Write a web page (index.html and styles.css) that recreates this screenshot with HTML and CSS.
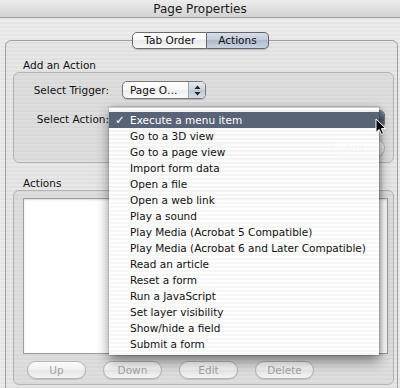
FILE: index.html
```html
<!DOCTYPE html>
<html lang="en">
<head>
    <meta charset="UTF-8">
    <meta name="viewport" content="width=device-width, initial-scale=1.0">
    <title>Page Properties</title>
    <link rel="stylesheet" href="styles.css">
</head>
<body>
    <div class="window">
        <div class="titlebar">Page Properties</div>

        <div class="window-body">
            <div class="tab-switch">
                <span class="tab-seg">Tab Order</span>
                <span class="tab-seg selected">Actions</span>
            </div>

            <div class="tab-panel">
                <div class="group-title">Add an Action</div>
                <div class="group add-group">
                    <div class="field-row">
                        <span class="field-label">Select Trigger:</span>
                        <div class="popup trigger-popup">
                            <span class="popup-text">Page O…</span>
                            <span class="popup-arrows">
                                <svg width="7" height="11" viewBox="0 0 7 11"><path d="M3.5 0.5 L6.5 4 L0.5 4 Z M3.5 10.5 L6.5 7 L0.5 7 Z" fill="#222"/></svg>
                            </span>
                        </div>
                    </div>
                    <div class="field-row second">
                        <span class="field-label">Select Action:</span>
                        <div class="popup action-popup open">
                            <span class="popup-text">Execute a menu item</span>
                            <span class="popup-arrows"></span>
                        </div>
                    </div>
                    <div class="add-row">
                        <button class="aqua-btn" disabled>Add...</button>
                    </div>
                </div>

                <div class="group-title second">Actions</div>
                <div class="group list-group">
                    <div class="action-list"></div>
                    <div class="list-buttons">
                        <button class="aqua-btn" disabled>Up</button>
                        <button class="aqua-btn" disabled>Down</button>
                        <button class="aqua-btn" disabled>Edit</button>
                        <button class="aqua-btn" disabled>Delete</button>
                    </div>
                </div>
            </div>
        </div>

        <!-- open pop-up menu for Select Action -->
        <ul class="popup-menu">
            <li class="checked"><span class="check">✓</span>Execute a menu item</li>
            <li>Go to a 3D view</li>
            <li>Go to a page view</li>
            <li>Import form data</li>
            <li>Open a file</li>
            <li>Open a web link</li>
            <li>Play a sound</li>
            <li>Play Media (Acrobat 5 Compatible)</li>
            <li>Play Media (Acrobat 6 and Later Compatible)</li>
            <li>Read an article</li>
            <li>Reset a form</li>
            <li>Run a JavaScript</li>
            <li>Set layer visibility</li>
            <li>Show/hide a field</li>
            <li>Submit a form</li>
        </ul>

        <svg class="cursor" width="12" height="18" viewBox="0 0 12 18">
            <path d="M1 1 L1 14.5 L4.2 11.4 L6.4 16.4 L8.6 15.4 L6.4 10.6 L10.8 10.6 Z" fill="#000" stroke="#fff" stroke-width="1"/>
        </svg>
    </div>
</body>
</html>
```

FILE: styles.css
```css
:root {
    --stripe-a: #ececec;
    --stripe-b: #e5e5e5;
    --group-border: #b2b2b2;
    --panel-border: #a0a0a0;
    --menu-highlight: #5a6477;
    --disabled-text: #a3a3a3;
}

* {
    margin: 0;
    padding: 0;
    box-sizing: border-box;
}

body {
    width: 400px;
    height: 388px;
    overflow: hidden;
    font-family: "DejaVu Sans", "Liberation Sans", sans-serif;
    font-size: 10.5px;
    color: #111;
}

.window {
    position: relative;
    height: 388px;
    background: repeating-linear-gradient(to bottom, var(--stripe-a) 0, var(--stripe-a) 2px, var(--stripe-b) 2px, var(--stripe-b) 4px);
}

.titlebar {
    height: 18px;
    line-height: 18px;
    text-align: center;
    font-size: 12px;
    color: #1a1a1a;
    background: linear-gradient(#ececec, #d3d3d3);
    border-bottom: 1px solid #9d9d9d;
}

.window-body {
    padding-top: 14px;
}

/* segmented control sitting on the panel's top edge */
.tab-switch {
    position: relative;
    z-index: 1;
    display: flex;
    justify-content: center;
    padding-left: 1px;
    margin-bottom: -9px;
}

.tab-seg {
    height: 17px;
    line-height: 15px;
    padding: 0 11px;
    border: 1px solid #6c6c6c;
    background: linear-gradient(#ffffff, #f6f6f6 50%, #e9e9e9 50%, #f8f8f8);
    box-shadow: 0 1px 1px rgba(0, 0, 0, 0.2);
}

.tab-seg:first-child {
    border-radius: 5px 0 0 5px;
}

.tab-seg:last-child {
    border-left: none;
    border-radius: 0 5px 5px 0;
}

.tab-seg.selected {
    background: linear-gradient(#d7dee7, #c1cad6 50%, #aebbcb 50%, #c9d2de);
    border-color: #5d6670;
}

.tab-panel {
    height: 360px;
    margin: 0 2px 0 5px;
    padding: 17px 3px 0 7px;
    border: 1px solid var(--panel-border);
    border-radius: 6px;
    background: rgba(0, 0, 0, 0.02);
}

.group-title {
    height: 14px;
    line-height: 14px;
    padding-left: 10px;
}

.group-title.second {
    margin-top: 13px;
}

.group {
    border: 1px solid var(--group-border);
    border-radius: 6px;
    background: rgba(0, 0, 0, 0.035);
}

.add-group {
    padding: 8px 8px 5px 0;
}

.field-row {
    display: flex;
    align-items: center;
    height: 18px;
}

.field-row.second {
    margin-top: 11px;
}

.field-label {
    width: 95px;
    margin-right: 13px;
    text-align: right;
}

.popup {
    display: flex;
    height: 18px;
    border: 1px solid #777;
    border-radius: 5px;
    background: linear-gradient(#ffffff, #f7f7f7 50%, #ececec 50%, #fbfbfb);
    box-shadow: 0 1px 1px rgba(0, 0, 0, 0.18);
    overflow: hidden;
}

.popup-text {
    flex: 1;
    line-height: 16px;
    padding-left: 7px;
    white-space: nowrap;
    overflow: hidden;
}

.popup-arrows {
    width: 17px;
    display: flex;
    align-items: center;
    justify-content: center;
    border-left: 1px solid #9aa3ae;
    background: linear-gradient(#e3e8ee, #cdd4de 50%, #bcc6d3 50%, #d6dde6);
}

.trigger-popup {
    width: 84px;
}

.action-popup {
    flex: 1;
}

.action-popup.open .popup-arrows {
    background: linear-gradient(#7b889b, #566478 50%, #47546a 50%, #6c7a90);
}

.add-row {
    display: flex;
    justify-content: flex-end;
    margin-top: 11px;
}

.add-row .aqua-btn {
    width: 52px;
}

.aqua-btn {
    height: 18px;
    font-family: inherit;
    font-size: 10.5px;
    color: var(--disabled-text);
    border: 1px solid #b5b5b5;
    border-radius: 9px;
    background: linear-gradient(#fbfbfb, #f1f1f1 50%, #e6e6e6 50%, #f3f3f3);
    box-shadow: 0 1px 1px rgba(0, 0, 0, 0.12);
}

.list-group {
    padding: 7px 5px 5px 9px;
}

.action-list {
    height: 156px;
    background: #fff;
    border: 1px solid #9c9c9c;
    box-shadow: inset 0 1px 2px rgba(0, 0, 0, 0.15);
}

.list-buttons {
    display: flex;
    gap: 17px;
    margin-top: 7px;
    padding-left: 4px;
}

.list-buttons .aqua-btn {
    width: 59px;
}

/* translucent open menu */
.popup-menu {
    position: absolute;
    left: 109px;
    top: 107px;
    width: 270px;
    height: 248px;
    list-style: none;
    padding: 4px 0 3px;
    border-top: 1px solid #c9c9c9;
    background: repeating-linear-gradient(to bottom, rgba(255, 255, 255, 0.93) 0, rgba(255, 255, 255, 0.93) 2px, rgba(246, 246, 246, 0.93) 2px, rgba(246, 246, 246, 0.93) 4px);
    box-shadow: 0 6px 12px rgba(0, 0, 0, 0.45), 2px 0 4px rgba(0, 0, 0, 0.2), 0 0 1px rgba(0, 0, 0, 0.4);
}

.popup-menu li {
    position: relative;
    height: 16px;
    line-height: 16px;
    padding-left: 21px;
    color: #111;
    white-space: nowrap;
}

.popup-menu li.checked {
    background: var(--menu-highlight);
    color: #fff;
}

.check {
    position: absolute;
    left: 6px;
    top: 0;
    font-size: 11.5px;
    font-weight: bold;
}

.cursor {
    position: absolute;
    left: 375px;
    top: 118px;
}
```
